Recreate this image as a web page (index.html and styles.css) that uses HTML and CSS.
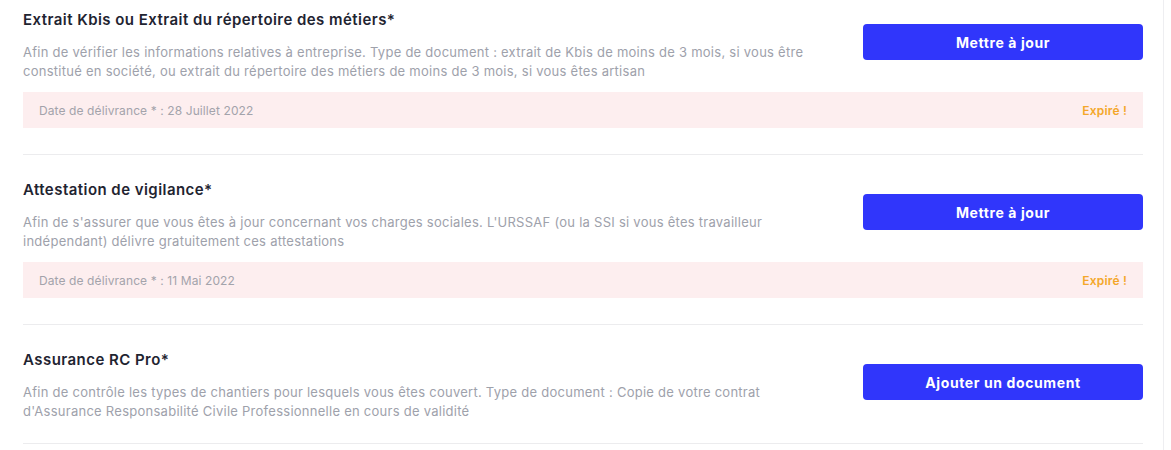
FILE: index.html
```html
<!DOCTYPE html>
<html lang="fr">
<head>
<meta charset="utf-8">
<link rel="stylesheet" href="styles.css">
</head>
<body>
<div class="page">
  <div class="docs">
    <section class="doc">
      <div class="doc-row">
        <div class="doc-text">
          <h3 class="doc-title">Extrait Kbis ou Extrait du répertoire des métiers*</h3>
          <p class="doc-desc">Afin de vérifier les informations relatives à entreprise. Type de document : extrait de Kbis de moins de 3 mois, si vous être constitué en société, ou extrait du répertoire des métiers de moins de 3 mois, si vous êtes artisan</p>
        </div>
        <button class="btn">Mettre à jour</button>
      </div>
      <div class="doc-status">
        <span class="status-date">Date de délivrance * : 28 Juillet 2022</span>
        <span class="status-flag">Expiré !</span>
      </div>
    </section>
    <section class="doc">
      <div class="doc-row">
        <div class="doc-text">
          <h3 class="doc-title">Attestation de vigilance*</h3>
          <p class="doc-desc">Afin de s'assurer que vous êtes à jour concernant vos charges sociales. L'URSSAF (ou la SSI si vous êtes travailleur indépendant) délivre gratuitement ces attestations</p>
        </div>
        <button class="btn">Mettre à jour</button>
      </div>
      <div class="doc-status">
        <span class="status-date">Date de délivrance * : 11 Mai 2022</span>
        <span class="status-flag">Expiré !</span>
      </div>
    </section>
    <section class="doc">
      <div class="doc-row">
        <div class="doc-text">
          <h3 class="doc-title">Assurance RC Pro*</h3>
          <p class="doc-desc">Afin de contrôle les types de chantiers pour lesquels vous êtes couvert. Type de document : Copie de votre contrat d'Assurance Responsabilité Civile Professionnelle en cours de validité</p>
        </div>
        <button class="btn">Ajouter un document</button>
      </div>
    </section>
  </div>
</div>
</body>
</html>
```
FILE: styles.css
```css
html, body {
  margin: 0;
  padding: 0;
  background: #ffffff;
}
body {
  font-family: Inter, "Open Sans", sans-serif;
  color: #1f2431;
}
.page {
  width: 1164px;
  height: 450px;
  overflow: hidden;
  border-right: 1px solid #eeeef1;
  box-sizing: border-box;
}
.docs {
  margin-left: 23px;
  width: 1120px;
  margin-top: -15px;
}
.doc {
  padding: 25px 0 26px;
  border-bottom: 1px solid #ececee;
}
.doc:last-child {
  padding-bottom: 22px;
}
.doc-row {
  display: flex;
  align-items: flex-start;
  justify-content: space-between;
}
.doc-text {
  width: 800px;
}
.doc-title {
  margin: 0;
  font-size: 15px;
  line-height: 20px;
  font-weight: 600;
  letter-spacing: 0.45px;
  color: #1f2431;
}
.doc-desc {
  margin: 12.5px 0 0;
  font-size: 13px;
  line-height: 19px;
  letter-spacing: 0.26px;
  color: #9ea1ab;
}
.btn {
  margin-top: 14px;
  width: 280px;
  height: 36px;
  border: 0;
  border-radius: 4px;
  background: #3036fb;
  color: #ffffff;
  font-family: Inter, sans-serif;
  font-weight: 700;
  font-size: 14px;
  letter-spacing: 0.6px;
}
.doc-status {
  margin-top: 11.5px;
  height: 36px;
  background: #fdeeef;
  display: flex;
  align-items: center;
  justify-content: space-between;
  padding: 0 16px;
}
.status-date {
  font-size: 12px;
  letter-spacing: 0.1px;
  color: #a3a3ab;
}
.status-flag {
  font-size: 12px;
  font-weight: 600;
  letter-spacing: 0.2px;
  color: #f4a72a;
}
```
